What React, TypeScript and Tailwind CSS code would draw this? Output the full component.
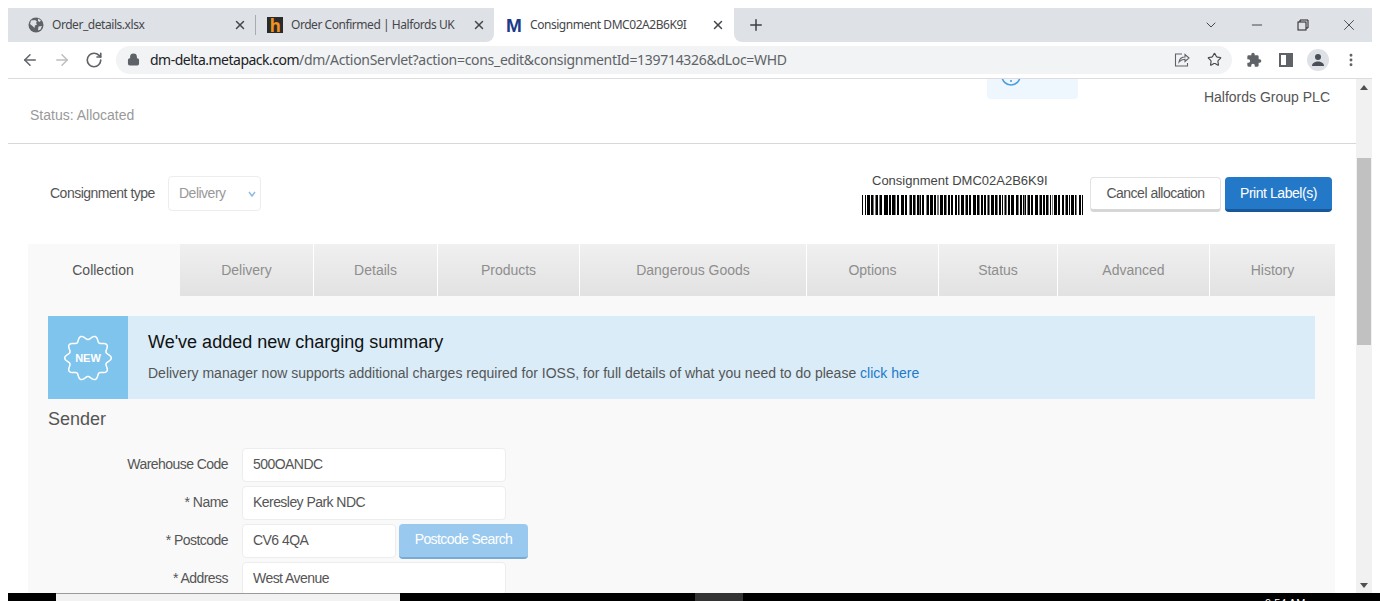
import { ArrowLeft, ArrowRight, RotateCw, X, Plus, ChevronDown, Minus, Lock, Star, MoreVertical } from "lucide-react"

const sans = "font-['Liberation_Sans',Arial,sans-serif]"
const chrome = "font-['Noto_Sans',sans-serif]"

const barcode =
  "#..#.###.##g.g##.g##..####.##.###g.##..###.##..g##.##g.##g#.##..g##.###.##.gg.###.##g.##.##..##.#g.###.g" +
  "##.##..###.##g.##.##.g#g.###.##g.##.#.g#g.##.###..##g.##.#g#.g##.##..###.g##.##.##g.#.g.###.##..##.g##.#.###.#g..##.#.###.##"

const tabs = [
  { label: "Delivery", w: "w-[133px]" },
  { label: "Details", w: "w-[123px]" },
  { label: "Products", w: "w-[141px]" },
  { label: "Dangerous Goods", w: "w-[226px]" },
  { label: "Options", w: "w-[131px]" },
  { label: "Status", w: "w-[118px]" },
  { label: "Advanced", w: "w-[151px]" },
  { label: "History", w: "w-[125px]" },
]

function Barcode() {
  const bars = barcode.slice(0, 221).split("")
  return (
    <svg width="221" height="20" viewBox="0 0 221 20" shapeRendering="crispEdges" className="block">
      {bars.map((c, i) =>
        c === "." ? null : <rect key={i} x={i} y={0} width={1} height={20} fill={c === "#" ? "#000" : "#777"} />,
      )}
    </svg>
  )
}

function NewBadge() {
  // wavy 10 point seal
  const pts: string[] = []
  for (let i = 0; i <= 160; i++) {
    const a = (i / 160) * Math.PI * 2
    const r = 20.5 + 2.1 * Math.cos(a * 10)
    pts.push(`${(24 + r * 1.03 * Math.cos(a)).toFixed(2)},${(24 + r * Math.sin(a)).toFixed(2)}`)
  }
  return (
    <svg width="48" height="48" viewBox="0 0 48 48">
      <polygon points={pts.join(" ")} fill="none" stroke="#fff" strokeWidth="1.5" strokeLinejoin="round" />
      <text x="24" y="28" textAnchor="middle" fill="#fff" fontSize="11" fontWeight="700" fontFamily="Liberation Sans, Arial, sans-serif">
        NEW
      </text>
    </svg>
  )
}

function Field({ label, value, narrow }: { label: string; value: string; narrow?: boolean }) {
  return (
    <div className="flex items-center h-[34px]">
      <div className="w-[200px] text-right text-[#555] text-[14px] tracking-[-0.55px] pb-[2px]">{label}</div>
      <div
        className={`ml-[14px] h-[34px] ${narrow ? "w-[154px]" : "w-[264px]"} shrink-0 bg-white border border-[#ededed] rounded-[4px] pl-[10px] pb-[2px] flex items-center text-[14px] text-[#555] tracking-[-0.55px]`}
      >
        {value}
      </div>
    </div>
  )
}

export default function App() {
  return (
    <div className={`w-[1380px] h-[601px] overflow-hidden bg-white flex flex-col ${sans}`}>
      <div className="h-2 shrink-0" />
      <div className="flex-1 min-h-0 flex flex-col mx-2">
        {/* tab strip */}
        <div className={`h-[34px] shrink-0 flex ${chrome} text-[12px] tracking-[-0.45px] text-[#45474a]`}>
          <div className="w-[486px] bg-[#dee1e6] rounded-br-lg flex items-center">
            <div className="w-[247px] flex items-center pl-5 shrink-0">
              <svg width="16" height="16" viewBox="0 0 16 16">
                <circle cx="8" cy="8" r="7.5" fill="#5f6368" />
                <path d="M3 3.5 7 3l2 1.5-1 1.5 1 1.5-2 1-.5 2.5L4.5 9 2 7zM10 1.5l3 2-1.5 1.5L10 4zM10.5 9.5 14 9l-1.5 3.5-2.5 1z" fill="#dee1e6" />
              </svg>
              <span className="ml-2 w-[181px] whitespace-nowrap">Order_details.xlsx</span>
              <X size={14} strokeWidth={2.5} className="text-[#45474a]" />
            </div>
            <div className="w-px h-5 bg-[#a8abaf]" />
            <div className="flex-1 flex items-center pl-[11px]">
              <div className="w-4 h-4 bg-[#2a2a2a] flex items-center justify-center text-[#f0931e] text-[17px] font-bold leading-none">h</div>
              <span className="ml-2 w-[181px] whitespace-nowrap">Order Confirmed | Halfords UK</span>
              <X size={14} strokeWidth={2.5} className="text-[#45474a]" />
            </div>
          </div>
          <div className="w-[240px] bg-white rounded-t-lg flex items-center pl-3">
            <span className={`w-4 text-[#1b3a8a] text-[19px] leading-none font-bold ${sans}`}>M</span>
            <span className="ml-2 w-[181px] whitespace-nowrap">Consignment DMC02A2B6K9I</span>
            <X size={14} strokeWidth={2.5} className="text-[#45474a]" />
          </div>
          <div className="flex-1 bg-[#dee1e6] rounded-bl-lg flex items-center">
            <Plus size={18} strokeWidth={2} className="ml-[13px] text-[#3c4043]" />
            <div className="ml-auto flex items-center text-[#202124]">
              <ChevronDown size={16} strokeWidth={1.2} />
              <Minus size={16} strokeWidth={1.2} className="ml-[30px]" />
              <svg width="12" height="12" viewBox="0 0 12 12" className="ml-[32px]" fill="none" stroke="#202124">
                <rect x="1" y="3" width="8" height="8" />
                <path d="M3 3V1h8v8H9" />
              </svg>
              <X size={18} strokeWidth={1} className="ml-[31px] mr-[14px]" />
            </div>
          </div>
        </div>
        {/* toolbar */}
        <div className={`h-[37px] shrink-0 bg-white border-b border-[#dadce0] flex items-center pb-[1px] ${chrome}`}>
          <ArrowLeft size={18} strokeWidth={2} className="ml-[13px] text-[#5f6368]" />
          <ArrowRight size={18} strokeWidth={2} className="ml-[14px] text-[#bcbec1]" />
          <RotateCw size={18} strokeWidth={2.2} className="ml-[14px] text-[#5f6368]" />
          <div className="ml-[13px] w-[1116px] h-[28px] bg-[#f1f3f4] rounded-full flex items-center pl-[11px]">
            <Lock size={13} strokeWidth={2.5} fill="#5f6368" className="text-[#5f6368]" />
            <span className="ml-[10px] text-[14px] tracking-[-0.3px] whitespace-nowrap text-[#5f6368] w-[994px]">
              <span className="text-[#202124] tracking-[-0.5px]">dm-delta.metapack.com</span>/dm/ActionServlet?action=cons_edit&amp;consignmentId=139714326&amp;dLoc=WHD
            </span>
            <svg width="16" height="16" viewBox="0 0 16 16" fill="none" stroke="#5f6368" strokeWidth="1.1" className="ml-[30px] shrink-0">
              <path d="M8 2H1.5v12h12v-3" />
              <path d="M5 10c.5-3 3-5 6-5V2.5L15 6l-4 3.5V7.2c-2.5 0-4.5 1-6 2.8z" />
            </svg>
            <Star size={15} strokeWidth={1.8} className="ml-[17px] text-[#45474a] shrink-0" />
          </div>
          <svg width="16" height="16" viewBox="0 0 24 24" fill="#5f6368" className="ml-[14px]">
            <path d="M20.5 11H19V7a2 2 0 0 0-2-2h-4V3.5a2.5 2.5 0 0 0-5 0V5H4a2 2 0 0 0-2 2v3.8h1.5a2.7 2.7 0 0 1 0 5.4H2V20a2 2 0 0 0 2 2h3.8v-1.5a2.7 2.7 0 0 1 5.4 0V22H17a2 2 0 0 0 2-2v-4h1.5a2.5 2.5 0 0 0 0-5z" />
          </svg>
          <div className="ml-[17px] w-[14px] h-[14px] border-2 border-[#5f6368] flex justify-end">
            <div className="w-[5px] bg-[#5f6368]" />
          </div>
          <div className="ml-[14px] w-[22px] h-[22px] rounded-full bg-[#dee1e6] flex items-center justify-center">
            <svg width="14" height="14" viewBox="0 0 14 14" fill="#4a4f57">
              <circle cx="7" cy="4" r="3" />
              <path d="M1 13c0-3 3-4.5 6-4.5s6 1.5 6 4.5z" />
            </svg>
          </div>
          <MoreVertical size={16} strokeWidth={2.4} className="ml-[14px] text-[#5f6368]" />
        </div>
        {/* page + scrollbar */}
        <div className="flex-1 min-h-0 flex">
          <div className="flex-1 min-w-0 flex flex-col overflow-hidden">
            <div className="h-[65px] shrink-0 border-b border-[#d8d8d8] flex items-start text-[14px]">
              <div className="flex-1 pl-[22px] pt-[26px] text-[#999]">Status: Allocated</div>
              <div className="w-[91px] h-[20px] bg-[#eff7fe] rounded-b-[4px] overflow-hidden pl-[14px]">
                <svg width="20" height="10" viewBox="0 0 20 10" fill="none" stroke="#4a9fe0" strokeWidth="1.6" className="block">
                  <circle cx="10" cy="-3" r="9" />
                  <path d="M10 1v2" />
                </svg>
              </div>
              <div className="w-[252px] text-right pt-[8px] text-[#555]">Halfords Group PLC</div>
              <div className="w-[26px]" />
            </div>
            <div className="h-[100px] shrink-0 flex items-start text-[#555] text-[14px]">
              <div className="pl-[42px] pt-[39px] tracking-[-0.5px] w-[160px]">Consignment type</div>
              <div className="mt-[32px] w-[93px] h-[35px] border border-[#ededed] rounded-[4px] flex items-center pl-[10px] text-[#999] tracking-[-0.5px]">
                Delivery
                <svg width="8" height="6" viewBox="0 0 8 6" fill="none" stroke="#8fbbe0" strokeWidth="1.5" className="ml-auto mr-[4px]">
                  <path d="M1 1l3 4 3-4" />
                </svg>
              </div>
              <div className="ml-[601px] w-[221px] pt-[29px] flex flex-col">
                <div className="pl-[10px] h-[22px] leading-[16px] text-[13px] text-[#444]">Consignment DMC02A2B6K9I</div>
                <Barcode />
              </div>
              <div className="ml-[7px] mt-[33px] w-[131px] h-[35px] bg-white border border-[#e2e2e2] border-b-[3px] border-b-[#d6d6d6] rounded-[4px] flex items-center justify-center tracking-[-0.5px]">
                Cancel allocation
              </div>
              <div className="ml-[4px] mt-[33px] w-[107px] h-[35px] bg-[#2379c7] border-b-[3px] border-b-[#16589a] rounded-[4px] flex items-center justify-center text-white tracking-[-0.45px]">
                Print Label(s)
              </div>
            </div>
            {/* panel */}
            <div className="ml-[20px] w-[1307px] flex-1 min-h-0 bg-[#f9f9f9] flex flex-col">
              <div className="h-[52px] shrink-0 flex text-[14px] text-[#8e8e8e] bg-white">
                <div className="w-[152px] bg-[#f9f9f9] flex items-center justify-center pr-[2px] text-[#555]">Collection</div>
                {tabs.map((t, i) => (
                  <div
                    key={t.label}
                    className={`${t.w} ${i > 0 ? "ml-px" : ""} bg-gradient-to-b from-[#f0f0f0] to-[#e2e2e2] flex items-center justify-center`}
                  >
                    {t.label}
                  </div>
                ))}
              </div>
              <div className="mx-[20px] mt-[20px] h-[83px] shrink-0 flex bg-[#d9ecf8]">
                <div className="w-[80px] bg-[#7fc4ec] flex items-center justify-center">
                  <NewBadge />
                </div>
                <div className="pl-[20px] pt-[14px]">
                  <div className="text-[18px] leading-[24px] text-[#111]">We've added new charging summary</div>
                  <div className="mt-[9px] text-[14px] leading-[20px] text-[#555]">
                    Delivery manager now supports additional charges required for IOSS, for full details of what you need to do please{" "}
                    <span className="text-[#2379c7]">click here</span>
                  </div>
                </div>
              </div>
              <div className="ml-[20px] mt-[9px] text-[18px] leading-[22px] text-[#555]">Sender</div>
              <div className="mt-[18px] flex flex-col gap-[4px]">
                <Field label="Warehouse Code" value="500OANDC" />
                <Field label="* Name" value="Keresley Park NDC" />
                <div className="flex h-[34px] items-start">
                  <Field label="* Postcode" value="CV6 4QA" narrow />
                  <div className="ml-[3px] w-[129px] h-[35px] bg-[#9ac9f0] border-b-[2px] border-b-[#7aa9d3] rounded-[4px] pb-[2px] flex items-center justify-center text-white text-[14px] tracking-[-0.6px]">
                    Postcode Search
                  </div>
                </div>
                <Field label="* Address" value="West Avenue" />
              </div>
            </div>
          </div>
          {/* scrollbar */}
          <div className="w-4 shrink-0 bg-[#f1f1f1] flex flex-col items-center">
            <div className="h-4 flex items-center justify-center">
              <div className="w-0 h-0 border-x-[4px] border-x-transparent border-b-[5px] border-b-[#505050]" />
            </div>
            <div className="mt-[63px] w-[14px] h-[187px] bg-[#c1c1c1]" />
            <div className="mt-auto h-4 flex items-center justify-center">
              <div className="w-0 h-0 border-x-[4px] border-x-transparent border-t-[5px] border-t-[#505050]" />
            </div>
          </div>
        </div>
      </div>
      {/* taskbar strip */}
      <div className="h-2 shrink-0 flex bg-black ml-2 overflow-hidden">
        <div className="ml-[48px] w-[344px] bg-[#f2f2f2] border-t border-[#9a9a9a]" />
        <div className="ml-[295px] w-[48px] bg-[#333]" />
        <div className="ml-[522px] text-white text-[11px] leading-[14px] pt-[3px] whitespace-nowrap">9:54 AM</div>
      </div>
    </div>
  )
}
